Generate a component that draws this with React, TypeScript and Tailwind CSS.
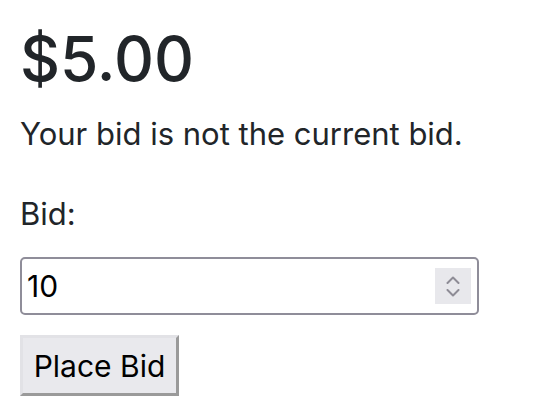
import React from "react";

// Bid panel — current price, status note and bid form

function Spinner() {
  return (
    <div className="w-[36px] h-[36px] bg-[#e8e8ec] flex flex-col items-center justify-center gap-[5px]">
      <svg width="14" height="8" viewBox="0 0 14 8" fill="none">
        <path d="M1.5 7L7 1.5L12.5 7" stroke="#8e8c96" strokeWidth="2" strokeLinecap="round" strokeLinejoin="round" />
      </svg>
      <svg width="14" height="8" viewBox="0 0 14 8" fill="none">
        <path d="M1.5 1L7 6.5L12.5 1" stroke="#8e8c96" strokeWidth="2" strokeLinecap="round" strokeLinejoin="round" />
      </svg>
    </div>
  );
}

export default function App() {
  return (
    <div className="min-h-[406px] bg-white px-5 pt-5 text-[#212529] font-['Inter','Liberation_Sans',sans-serif]">
      <h2 className="text-[62px] leading-[77px] font-medium mb-[13px]">$5.00</h2>

      <p className="text-[31px] leading-[48px] mb-8">Your bid is not the current bid.</p>

      <label htmlFor="bid" className="block text-[31px] leading-[48px] mb-[19px]">
        Bid:
      </label>

      {/* Number field */}
      <div className="w-[459px] h-[58px] flex items-center border-2 border-[#8f8d99] rounded-[5px] pl-[5px] pr-[6px]">
        <input
          id="bid"
          type="text"
          defaultValue="10"
          className="flex-1 min-w-0 outline-none bg-transparent text-black text-[30px] leading-[36px]"
        />
        <Spinner />
      </div>

      <button className="mt-[20px] w-[159px] h-[61px] bg-[#e9e9ed] text-black text-[30px] leading-[36px] border-[3px] border-t-[#e2e2e6] border-l-[#e2e2e6] border-b-[#9a9a9a] border-r-[#9a9a9a]">
        Place Bid
      </button>
    </div>
  );
}
